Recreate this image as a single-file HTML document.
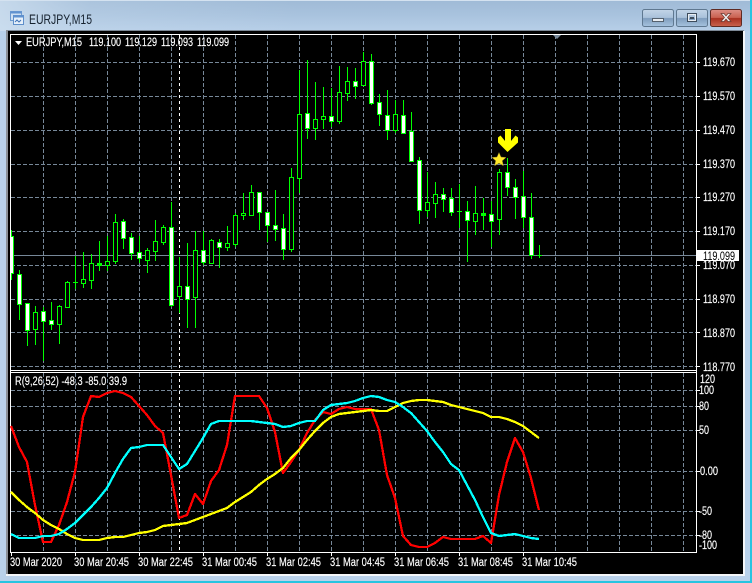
<!DOCTYPE html>
<html><head><meta charset="utf-8"><style>
html,body{margin:0;padding:0;width:752px;height:583px;overflow:hidden;background:#b9d1ea}
svg{display:block;position:absolute;left:0;top:0}
text{font-family:"Liberation Sans",sans-serif}
</style></head><body>
<svg width="752" height="583" viewBox="0 0 752 583" xmlns="http://www.w3.org/2000/svg">
<defs>
<linearGradient id="tb" x1="0" y1="0" x2="0" y2="1"><stop offset="0" stop-color="#9fbad6"/><stop offset=".5" stop-color="#a9c3de"/><stop offset="1" stop-color="#b7cfe8"/></linearGradient>
<linearGradient id="tl" x1="0" y1="0" x2="1" y2="0"><stop offset="0" stop-color="#cfe0f0" stop-opacity=".8"/><stop offset=".12" stop-color="#cfe0f0" stop-opacity=".25"/><stop offset=".4" stop-color="#cfe0f0" stop-opacity="0"/></linearGradient>
<linearGradient id="bb" x1="0" y1="0" x2="0" y2="1"><stop offset="0" stop-color="#c3d5e8"/><stop offset=".48" stop-color="#a9c1da"/><stop offset=".52" stop-color="#7f9dbd"/><stop offset="1" stop-color="#a6c3df"/></linearGradient>
<linearGradient id="rb" x1="0" y1="0" x2="0" y2="1"><stop offset="0" stop-color="#dc9086"/><stop offset=".48" stop-color="#c9604f"/><stop offset=".52" stop-color="#a8301f"/><stop offset="1" stop-color="#c9644f"/></linearGradient>
</defs>
<rect width="752" height="583" fill="#b9d1ea"/>
<rect width="752" height="31" fill="url(#tb)"/>
<rect width="752" height="31" fill="url(#tl)"/>
<rect x="0" y="0" width="752" height="1" fill="#d4e2f0"/>
<rect x="750" y="0" width="2" height="583" fill="#27c4e0"/>
<rect x="0" y="581" width="752" height="2" fill="#27c4e0"/>
<!-- title icon -->
<g shape-rendering="crispEdges">
<rect x="10.500" y="11.500" width="11" height="9" fill="#cfe0f2" stroke="#6f9bd0"/>
<rect x="10.500" y="11.500" width="11" height="2" fill="#5f92d0"/>
<rect x="14.500" y="15.500" width="8" height="1" fill="#5f92d0"/>
<rect x="13.500" y="15.500" width="10" height="9" fill="#e6f0fa" stroke="#5f8fca"/>
<rect x="13.500" y="15.500" width="10" height="2" fill="#5f92d0"/>
</g>
<path d="M15 22l2-2 2 2 2-2" fill="none" stroke="#3f73b8"/>
<text x="29" y="24" font-size="14" fill="#16222f" textLength="63" lengthAdjust="spacingAndGlyphs">EURJPY,M15</text>
<!-- buttons -->
<rect x="642.500" y="9.500" width="31" height="17" rx="2" fill="url(#bb)" stroke="#5f7890"/>
<rect x="676.500" y="9.500" width="31" height="17" rx="2" fill="url(#bb)" stroke="#5f7890"/>
<rect x="710.500" y="9.500" width="31" height="17" rx="2" fill="url(#rb)" stroke="#5e2a22"/>
<rect x="652.500" y="18.500" width="11" height="3" fill="#e8edf2" stroke="#55616e"/>
<rect x="687.500" y="13.500" width="9" height="8" fill="none" stroke="#3d4c5c"/>
<rect x="688.500" y="14.500" width="7" height="6" fill="none" stroke="#e8edf2"/>
<rect x="690" y="17" width="4" height="2" fill="#3d4c5c"/>
<path d="M721 13.500h3l2 2.500 2-2.500h3l-3.500 4 3.500 4h-3l-2-2.500-2 2.500h-3l3.500-4z" fill="#f0eeee" stroke="#6b3a32" stroke-width=".7"/>
<!-- client -->
<rect x="6" y="30" width="738" height="1" fill="#7c8895"/>
<rect x="6" y="30" width="2" height="545" fill="#8a8f96"/>
<rect x="8" y="31" width="735" height="543" fill="#000"/>
<rect x="6" y="574" width="739" height="2" fill="#f4f6f8"/>
<rect x="743" y="31" width="2" height="545" fill="#f4f6f8"/>

<!-- grid -->
<g fill="none" stroke="#778899" stroke-dasharray="4 2" shape-rendering="crispEdges">
<path d="M11 62.500H696M11 96.500H696M11 130.500H696M11 164.500H696M11 197.500H696M11 231.500H696M11 265.500H696M11 299.500H696M11 332.500H696M11 366.500H696"/>
<path d="M11 390.500H696M11 406.500H696M11 430.500H696M11 471.500H696M11 511.500H696M11 535.500H696"/>
<path d="M43.500 35V370M75.500 35V370M107.500 35V370M139.500 35V370M171.500 35V370M203.500 35V370M235.500 35V370M267.500 35V370M299.500 35V370M331.500 35V370M363.500 35V370M395.500 35V370M427.500 35V370M459.500 35V370M491.500 35V370M523.500 35V370M555.500 35V370M587.500 35V370M619.500 35V370M651.500 35V370M683.500 35V370"/>
<path d="M43.500 373V552M75.500 373V552M107.500 373V552M139.500 373V552M171.500 373V552M203.500 373V552M235.500 373V552M267.500 373V552M299.500 373V552M331.500 373V552M363.500 373V552M395.500 373V552M427.500 373V552M459.500 373V552M491.500 373V552M523.500 373V552M555.500 373V552M587.500 373V552M619.500 373V552M651.500 373V552M683.500 373V552"/>
</g>
<path d="M179.500 35V370M179.500 373V552" fill="none" stroke="#fff" stroke-dasharray="3 3" shape-rendering="crispEdges"/>
<!-- price line -->
<rect x="11" y="255" width="686" height="1" fill="#778899"/>

<!-- wicks -->
<path shape-rendering="crispEdges" fill="none" stroke="#00ff00" d="M11.500 230V280M19.500 270V320M27.500 303V346M35.500 306V345M43.500 307V361M51.500 302V330M59.500 305V344M67.500 281V307M75.500 256V289M83.500 252V288M91.500 254V289M99.500 241V271M107.500 236V271M115.500 214V264M123.500 219V249M131.500 233V260M139.500 236V263M147.500 248V273M155.500 220V261M163.500 225V245M171.500 202V307M179.500 257V313M187.500 243V328M195.500 231V328M203.500 231V265M211.500 239V263M219.500 239V268M227.500 226V251M235.500 213V247M243.500 193V220M251.500 185V216M259.500 192V230M267.500 212V242M275.500 190V241M283.500 214V260M291.500 168V252M299.500 70V193M307.500 60V139M315.500 82V140M323.500 87V129M331.500 88V127M339.500 66V124M347.500 67V101M355.500 68V99M363.500 52V85M371.500 54V105M379.500 94V126M387.500 90V140M395.500 100V133M403.500 100V134M411.500 112V161M419.500 157V224M427.500 172V217M435.500 182V218M443.500 188V212M451.500 188V216M459.500 184V228M467.500 201V262M475.500 186V235M483.500 198V230M491.500 201V247M499.500 169V235M507.500 158V196M515.500 179V219M523.500 171V228M531.500 193V259M539.500 245V258"/>
<!-- doji -->
<path shape-rendering="crispEdges" fill="none" stroke="#00ff00" d="M73 282.500H78M457 211.500H462M537 255.500H542"/>
<!-- filled (white) bodies -->
<path shape-rendering="crispEdges" fill="#fff" stroke="#00ff00" d="M10.500 236.500H13.500V273.500H10.500zM17.500 274.500h4V304.500h-4zM25.500 303.500h4V330.500h-4zM41.500 311.500h4V321.500h-4zM49.500 320.500h4V324.500h-4zM121.500 221.500h4V238.500h-4zM129.500 237.500h4V253.500h-4zM137.500 252.500h4V258.500h-4zM169.500 227.500h4V305.500h-4zM185.500 286.500h4V299.500h-4zM201.500 250.500h4V262.500h-4zM217.500 242.500h4V247.500h-4zM257.500 192.500h4V212.500h-4zM265.500 212.500h4V225.500h-4zM273.500 225.500h4V229.500h-4zM281.500 228.500h4V249.500h-4zM305.500 113.500h4V128.500h-4zM329.500 116.500h4V121.500h-4zM353.500 81.500h4V86.500h-4zM369.500 61.500h4V103.500h-4zM377.500 102.500h4V114.500h-4zM385.500 115.500h4V130.500h-4zM401.500 115.500h4V133.500h-4zM409.500 131.500h4V161.500h-4zM417.500 160.500h4V210.500h-4zM441.500 194.500h4V199.500h-4zM449.500 198.500h4V212.500h-4zM465.500 211.500h4V220.500h-4zM489.500 214.500h4V221.500h-4zM505.500 172.500h4V187.500h-4zM513.500 187.500h4V197.500h-4zM521.500 196.500h4V217.500h-4zM529.500 217.500h4V255.500h-4z"/>
<!-- hollow bodies -->
<path shape-rendering="crispEdges" fill="#000" stroke="#00ff00" d="M33.500 312.500h4V329.500h-4zM57.500 306.500h4V324.500h-4zM65.500 282.500h4V307.500h-4zM81.500 279.500h4V283.500h-4zM89.500 263.500h4V280.500h-4zM105.500 261.500h4V265.500h-4zM113.500 222.500h4V261.500h-4zM145.500 250.500h4V260.500h-4zM153.500 241.500h4V251.500h-4zM161.500 227.500h4V242.500h-4zM177.500 286.500h4V296.500h-4zM193.500 250.500h4V297.500h-4zM209.500 240.500h4V263.500h-4zM225.500 243.500h4V247.500h-4zM233.500 215.500h4V244.500h-4zM241.500 213.500h4V215.500h-4zM249.500 192.500h4V215.500h-4zM289.500 177.500h4V249.500h-4zM297.500 114.500h4V178.500h-4zM313.500 119.500h4V128.500h-4zM321.500 116.500h4V119.500h-4zM337.500 92.500h4V121.500h-4zM345.500 81.500h4V93.500h-4zM361.500 61.500h4V85.500h-4zM393.500 114.500h4V130.500h-4zM425.500 202.500h4V210.500h-4zM433.500 194.500h4V203.500h-4zM473.500 213.500h4V221.500h-4zM497.500 172.500h4V219.500h-4z"/>
<path shape-rendering="crispEdges" fill="#00ff00" stroke="#00ff00" d="M97.500 263.500h4V265.500h-4zM481.500 213.500h4V215.500h-4z"/>

<!-- arrow + star -->
<path fill="#ffff00" d="M505 129h6v12l4.500-5.500 2.500 2v5L507.500 152 498 142.500v-5l2.500-2L505 141z"/>
<path d="M499 152.500l2 4.500 5 .5-3.700 3.300 1.100 5-4.400-2.600-4.400 2.600 1.100-5-3.700-3.300 5-.5z" fill="#ffe92a" stroke="#8a7a20" stroke-width=".5"/>

<!-- separators / borders -->
<g fill="#fff" shape-rendering="crispEdges">
<rect x="10" y="34" width="687" height="1"/>
<rect x="10" y="34" width="1" height="519"/>
<rect x="696" y="34" width="1" height="519"/>
<rect x="10" y="370" width="687" height="1"/>
<rect x="10" y="372" width="687" height="1"/>
<rect x="10" y="552" width="687" height="1"/>
</g>
<path d="M553 35h8l-4 4z" fill="#778899"/>
<!-- ticks -->
<path shape-rendering="crispEdges" fill="none" stroke="#fff" d="M697 62.500h3M697 96.500h3M697 130.500h3M697 164.500h3M697 197.500h3M697 231.500h3M697 265.500h3M697 299.500h3M697 332.500h3M697 366.500h3M697 390.500h3M697 406.500h3M697 430.500h3M697 471.500h3M697 511.500h3M697 535.500h3M11.500 553v3M75.500 553v3M139.500 553v3M203.500 553v3M267.500 553v3M331.500 553v3M395.500 553v3M459.500 553v3M523.500 553v3"/>

<!-- indicator lines -->
<g fill="none" stroke-width="2.300" stroke-linejoin="round" shape-rendering="crispEdges">
<polyline stroke="#ff0000" points="11,426 19,447 27,462 35,505 43,542 51,542 59,525 67,502 75,472 83,417 91,396 99,397 107,393 115,391 123,393 131,397 139,406 147,415 155,426 163,433 171,475 179,518 187,515 195,494 203,504 211,481 219,470 227,445 235,396 243,396 251,396 259,396 267,408 275,432 283,473 291,462 299,450 307,433 315,420 323,412 331,414 339,409 347,407 355,409 363,409 371,409 379,430 387,475 395,498 403,536 411,545 419,547 427,547 435,543 443,537 451,539 459,539 467,539 475,539 483,536 491,543 499,495 507,462 515,438 523,452 531,478 539,510"/>
<polyline stroke="#ffff00" points="11,492 19,500 27,507 35,513 43,520 51,525 59,529 67,534 75,538 83,540 91,540 99,540 107,538 115,537 123,537 131,535 139,533 147,532 155,530 163,526 171,525 179,524 187,523 195,520 203,517 211,514 219,511 227,508 235,502 243,497 251,492 259,485 267,479 275,474 283,468 291,458 299,450 307,440 315,431 323,423 331,417 339,414 347,413 355,412 363,411 371,410 379,411 387,411 395,407 403,403 411,401 419,400 427,400 435,401 443,402 451,405 459,407 467,409 475,411 483,413 491,417 499,417 507,419 515,422 523,426 531,432 539,438"/>
<polyline stroke="#00ffff" points="11,534 19,538 27,538 35,538 43,536 51,536 59,534 67,529 75,523 83,515 91,507 99,498 107,488 115,473 123,459 131,448 139,447 147,445 155,445 163,445 171,457 179,469 187,464 195,451 203,438 211,424 219,421 227,421 235,421 243,421 251,421 259,422 267,423 275,424 283,427 291,426 299,423 307,421 315,421 323,410 331,405 339,404 347,403 355,401 363,398 371,396 379,397 387,400 395,402 403,407 411,413 419,422 427,431 435,442 443,452 451,464 459,470 467,485 475,500 483,517 491,533 499,536 507,535 515,534 523,536 531,538 539,539"/>
</g>

<!-- legends -->
<path d="M15 41h7l-3.500 4z" fill="#fff"/>
<g font-size="11.500" fill="#fff" stroke="#fff" stroke-width=".15">
<text x="26" y="46" textLength="56" lengthAdjust="spacingAndGlyphs">EURJPY,M15</text>
<text x="89" y="46" textLength="32" lengthAdjust="spacingAndGlyphs">119.100</text>
<text x="125" y="46" textLength="32" lengthAdjust="spacingAndGlyphs">119.129</text>
<text x="161" y="46" textLength="32" lengthAdjust="spacingAndGlyphs">119.093</text>
<text x="197" y="46" textLength="32" lengthAdjust="spacingAndGlyphs">119.099</text>
<text x="15" y="385" textLength="112" lengthAdjust="spacingAndGlyphs">R(9,26,52) -48.3 -85.0 39.9</text>
<text x="703" y="66" textLength="32" lengthAdjust="spacingAndGlyphs">119.670</text>
<text x="703" y="100" textLength="32" lengthAdjust="spacingAndGlyphs">119.570</text>
<text x="703" y="134" textLength="32" lengthAdjust="spacingAndGlyphs">119.470</text>
<text x="703" y="168" textLength="32" lengthAdjust="spacingAndGlyphs">119.370</text>
<text x="703" y="201" textLength="32" lengthAdjust="spacingAndGlyphs">119.270</text>
<text x="703" y="235" textLength="32" lengthAdjust="spacingAndGlyphs">119.170</text>
<text x="703" y="269" textLength="32" lengthAdjust="spacingAndGlyphs">119.070</text>
<text x="703" y="303" textLength="32" lengthAdjust="spacingAndGlyphs">118.970</text>
<text x="703" y="337" textLength="32" lengthAdjust="spacingAndGlyphs">118.870</text>
<text x="703" y="371" textLength="32" lengthAdjust="spacingAndGlyphs">118.770</text>
<text x="700" y="383" textLength="15" lengthAdjust="spacingAndGlyphs">120</text>
<text x="699" y="394" textLength="15" lengthAdjust="spacingAndGlyphs">100</text>
<text x="699" y="410" textLength="10" lengthAdjust="spacingAndGlyphs">80</text>
<text x="699" y="434" textLength="10" lengthAdjust="spacingAndGlyphs">50</text>
<text x="700" y="475" textLength="18" lengthAdjust="spacingAndGlyphs">0.00</text>
<text x="699" y="515" textLength="13" lengthAdjust="spacingAndGlyphs">-50</text>
<text x="699" y="539" textLength="13" lengthAdjust="spacingAndGlyphs">-80</text>
<text x="699" y="549" textLength="18" lengthAdjust="spacingAndGlyphs">-100</text>
<text x="10" y="566" textLength="52" lengthAdjust="spacingAndGlyphs">30 Mar 2020</text>
<text x="74" y="566" textLength="55" lengthAdjust="spacingAndGlyphs">30 Mar 20:45</text>
<text x="138" y="566" textLength="55" lengthAdjust="spacingAndGlyphs">30 Mar 22:45</text>
<text x="202" y="566" textLength="55" lengthAdjust="spacingAndGlyphs">31 Mar 00:45</text>
<text x="266" y="566" textLength="55" lengthAdjust="spacingAndGlyphs">31 Mar 02:45</text>
<text x="330" y="566" textLength="55" lengthAdjust="spacingAndGlyphs">31 Mar 04:45</text>
<text x="394" y="566" textLength="55" lengthAdjust="spacingAndGlyphs">31 Mar 06:45</text>
<text x="458" y="566" textLength="55" lengthAdjust="spacingAndGlyphs">31 Mar 08:45</text>
<text x="522" y="566" textLength="55" lengthAdjust="spacingAndGlyphs">31 Mar 10:45</text>
</g>
<rect x="697" y="250" width="42" height="11" fill="#fff"/>
<text x="703" y="260" font-size="11.500" fill="#000" textLength="32" lengthAdjust="spacingAndGlyphs">119.099</text>
</svg>
</body></html>
